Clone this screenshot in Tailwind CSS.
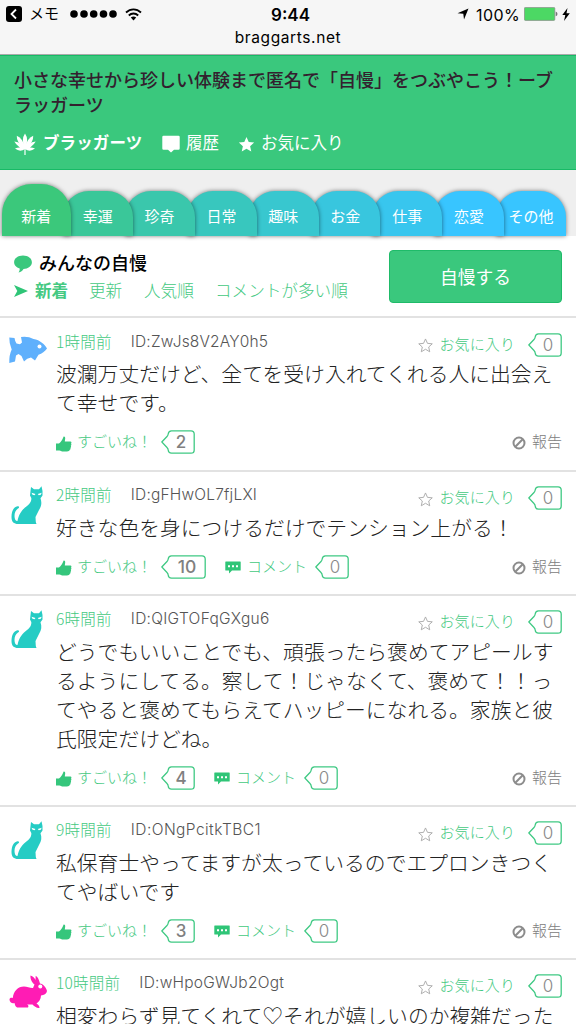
<!DOCTYPE html>
<html lang="ja">
<head>
<meta charset="utf-8">
<title>ブラッガーツ</title>
<script src="https://cdn.jsdelivr.net/npm/@tailwindcss/browser@4"></script>
</head>
<body class="w-[576px] h-[1024px] overflow-hidden bg-white font-['Noto_Sans_CJK_JP',sans-serif] text-[#333] whitespace-nowrap">
<svg class="hidden">
  <symbol id="fish" viewBox="0 0 38 28"><path fill="#5fb0fc" d="M.3 1.500L5.500 2Q6 5.500 7.500 7.500L11 8.300L13 6.500L12 1Q19 0 24.500 3C31 4 36 8.500 38 12.500C36 15.500 33 17.500 29.500 18.800L26 24.500L22 21.500Q18 22 15 25.500L12.500 20L9.500 18L7 19.500L6 25.500L.3 27Q0 19 2.700 13.500Q0 7 .3 1.500Z"/><circle cx="30.500" cy="10.500" r="2" fill="#fff"/></symbol>
  <symbol id="cat" viewBox="0 0 33 38"><path fill="#25ccc4" d="M20 1L23 3.200H28L30.500 .3L31.500 5V9.500L29.500 12.300C31 17 30.500 20 28 24L24.500 31L24.800 36L25.500 38H7C3 38 .5 36 .5 31C.5 25 2.500 21 6.500 20.200C8.500 20 8.600 22 7 22.500C4.500 24 3.500 27 3.500 30C3.500 33 4.500 35 6.500 35C8 27 12 23 16 20C20 17 20.500 14 20.300 12L19 9.500Z"/><path fill="#fff" d="M20.500 6.800L24.500 8L23.500 9.200L21.500 8.800ZM30.700 6.800L26.800 8L27.800 9.200L29.800 8.800Z"/></symbol>
  <symbol id="rabbit" viewBox="0 0 38 34"><path fill="#ff1cb4" d="M21.500 .5C24 1 25.500 3 26.500 5L26.700 .8C29 2 30 5 31 8.500C34 9 37 12 38 16C37.500 19 35 20 32 20.500C32 24 30 27 27.500 28.500C29.500 30 30.500 31 30.500 33C28 33.500 25 31 23.500 29.500L18 29.500C19.500 30 19.800 31.500 19 32.500H9C6.500 32.500 6 30 5.500 28C3.500 29 .5 27.500 .5 24.500C.5 23 2 22.500 3.800 23C4.500 16 9 11.500 15 11.500C18 11.500 22 13.500 24 13L25.500 9.500C23 7.500 21 4 21.500 .5Z"/><circle cx="31.300" cy="11.500" r="2" fill="#fff"/></symbol>
  <symbol id="thumb" viewBox="0 0 16 16"><path fill="#35c67c" d="M7.500 .8C8.300 .2 9.300 1 9.200 2.500L8.800 5.500H14.500C15.500 5.600 15.800 7 15 7.600C15.600 8.300 15.500 9.300 14.800 9.800C15.300 10.500 15.100 11.500 14.400 12C14.800 12.600 14.500 13.500 13.800 13.800C13.500 15 12.500 15.500 11 15.500H7C5.500 15.500 4.500 14.800 3.500 14.500H0V7.500H3C5 6 6.500 3.500 7 2Z"/></symbol>
  <symbol id="comment" viewBox="0 0 16 13"><path fill="#2fc577" d="M.8 .5H15.200Q15.700 .5 15.700 1V9Q15.700 9.500 15.200 9.500H7L4 12.500V9.500H.8Q.3 9.500 .3 9V1Q.3 .5 .8 .5Z"/><path fill="#fff" d="M3 4.300h2v2H3zM7 4.300h2v2H7zM11 4.300h2v2h-2z"/></symbol>
  <symbol id="star" viewBox="0 0 16 16"><path d="M8 1L10.100 5.700L15.200 6.200L11.400 9.600L12.500 14.700L8 12L3.500 14.700L4.600 9.600L.8 6.200L5.900 5.700Z"/></symbol>
  <symbol id="ban" viewBox="0 0 14 14"><g fill="none" stroke="#8c8c8c" stroke-width="2"><circle cx="7" cy="7" r="5.500"/><path d="M3.300 10.700L10.700 3.300"/></g></symbol>
  <symbol id="tag34" viewBox="0 0 34 24"><path fill="#fff" stroke="#3fc983" stroke-width="1.300" d="M.8 12L6 6.500Q7 5.500 7.200 4Q7.500 .8 10.500 .8H30Q33.200 .8 33.200 4V20Q33.200 23.200 30 23.200H10.500Q7.500 23.200 7.200 20Q7 18.500 6 17.500Z"/></symbol>
  <symbol id="tag45" viewBox="0 0 45 24"><path fill="#fff" stroke="#3fc983" stroke-width="1.300" d="M.8 12L6 6.500Q7 5.500 7.200 4Q7.500 .8 10.500 .8H41Q44.200 .8 44.200 4V20Q44.200 23.200 41 23.200H10.500Q7.500 23.200 7.200 20Q7 18.500 6 17.500Z"/></symbol>
</svg>

<div class="h-[55px] bg-[#f6f6f6] text-black font-['Inter',sans-serif] border-b border-[#aaa]">
  <div class="grid grid-cols-[1fr_auto_1fr] items-center h-[28px] pl-[6px] pr-[6px]">
    <div class="flex items-center">
      <svg class="w-[16px] h-[16px]" viewBox="0 0 16 16"><rect width="16" height="16" rx="3" fill="#000"/><path d="M10 3.500L5.500 8L10 12.500" fill="none" stroke="#fff" stroke-width="1.800"/></svg>
      <span class="ml-[7px] -mt-[3px] text-[15px] leading-none w-[29px] font-['Noto_Sans_CJK_JP',sans-serif]">メモ</span>
      <svg class="ml-[12px] w-[48px] h-[8px]" viewBox="0 0 48 8"><circle cx="4" cy="4" r="3.800"/><circle cx="14" cy="4" r="3.800"/><circle cx="23.700" cy="4" r="3.800"/><circle cx="33.500" cy="4" r="3.800"/><circle cx="43" cy="4" r="3.800"/></svg>
      <svg class="ml-[7px] w-[17px] h-[13px]" viewBox="0 0 17 13"><g fill="none" stroke="#000" stroke-width="1.800"><path d="M1 4.500C5.500 .2 11.500 .2 16 4.500"/><path d="M3.800 7.500C6.500 4.800 10.500 4.800 13.200 7.500"/></g><path d="M8.500 12.500L5.800 9.600Q8.500 7.400 11.200 9.600Z"/></svg>
    </div>
    <div class="text-[17px] font-semibold leading-none pt-[2px] pl-[5px]">9:44</div>
    <div class="flex items-center justify-end">
      <svg class="w-[12px] h-[12px] mr-[7px]" viewBox="0 0 12 12"><path d="M11.500 .5L7 11.500L6.300 5.800L.5 5.200Z"/></svg>
      <span class="text-[16px] leading-none pt-[1px] tracking-[0.4px]">100%</span>
      <svg class="ml-[4px] w-[34px] h-[14px]" viewBox="0 0 34 14"><rect x=".4" y=".4" width="30.400" height="13" rx="1" fill="#4cd864" stroke="#888" stroke-width=".7"/><path d="M31.700 4.500Q33.500 5 33.500 7T31.700 9.300Z" fill="#777"/></svg>
      <svg class="ml-[4px] w-[8px] h-[13px]" viewBox="0 0 8 13"><path d="M5.500 0L.3 7H3.300L2 13L7.800 5.300H4.500Z"/></svg>
    </div>
  </div>
  <div class="text-center text-[15.5px] leading-[20px] tracking-[0.6px]">braggarts.net</div>
</div>

<header class="h-[115px] bg-[#3ac87d] border-t border-b-[1.5px] border-[#17ba66] pl-[14px] pt-[11px]">
  <h1 class="text-[18px] leading-[25px] font-medium text-[#33202e]">小さな幸せから珍しい体験まで匿名で「自慢」をつぶやこう！ーブ<br>ラッガーツ</h1>
  <nav class="mt-[13px] flex items-center h-[24px] text-white text-[16.500px]">
    <svg class="w-[22px] h-[22px] mt-[4px]" viewBox="0 0 22 22"><g fill="#fff"><path id="leaf" d="M11 .5Q15 6 11.500 16H10.500Q7 6 11 .5Z"/><use href="#leaf" transform="rotate(32 11 16)"/><use href="#leaf" transform="rotate(-32 11 16)"/><path d="M21.700 8.500Q18 15 11 16Q14 9 21.700 8.500ZM.3 8.500Q4 15 11 16Q8 9 .3 8.500ZM21 15.500Q16 19.500 11 16Q16 13.500 21 15.500ZM1 15.500Q6 19.500 11 16Q6 13.500 1 15.500Z"/><path d="M10.400 15h1.200v7h-1.200z"/></g></svg>
    <span class="ml-[7px] w-[100px] font-bold tracking-[0.100px]">ブラッガーツ</span>
    <svg class="ml-[19px] w-[18px] h-[18px] mt-[3px]" viewBox="0 0 18 18"><path fill="#fff" d="M1.500 .8H16.500Q17.700 .8 17.700 2V13.500Q17.700 14.700 16.500 14.700H12L9 17.500L6 14.700H1.500Q.3 14.700 .3 13.500V2Q.3 .8 1.500 .8Z"/></svg>
    <span class="ml-[6px] w-[33px]">履歴</span>
    <svg class="ml-[19px] w-[17px] h-[17px] mt-[4px] fill-white"><use href="#star"/></svg>
    <span class="ml-[6px]">お気に入り</span>
  </nav>
</header>

<div class="h-[66px] bg-[#efefef] pl-[2px] flex items-end" id="tabs"></div>

<section class="h-[82px] bg-white border-b-2 border-[#e2e2e2] flex pl-[14px] pr-[14px] justify-between">
  <div>
    <div class="mt-[14px] flex items-center h-[24px]">
      <svg class="w-[18px] h-[18px] mt-[3px]" viewBox="0 0 18 18"><path fill="#3ac87d" d="M9 .5C14 .5 17.900 3.300 17.900 7.200S14 13.800 9.500 13.900C8.500 15.500 7 17 4.500 17.500C5.500 16 5.800 14.500 5.700 13.400C2.300 12.500 .1 10 .1 7.200C.1 3.300 4 .5 9 .5Z"/></svg>
      <h2 class="ml-[7px] text-[18px] font-medium text-black leading-[24px]">みんなの自慢</h2>
    </div>
    <div class="mt-[4px] flex items-center h-[24px] text-[16.600px] text-[#45c982] leading-[24px] font-light">
      <svg class="w-[14px] h-[14px] mt-[2px]" viewBox="0 0 14 14"><path fill="#2fc577" d="M0 1L14 7L0 13L3.300 7Z"/></svg>
      <span class="ml-[7px] w-[54px] font-bold">新着</span>
      <span class="w-[55px]">更新</span>
      <span class="w-[71px]">人気順</span>
      <span>コメントが多い順</span>
    </div>
  </div>
  <div class="mt-[14px] w-[173px] h-[53px] rounded-[4px] bg-[#3ac87d] border-[1.5px] border-[#1fbb69] text-white text-[17.800px] leading-[50px] text-center">自慢する</div>
</section>

<main id="posts"></main>

<script>
const tabs = [['新着','#3bc87b'],['幸運','#3ac799'],['珍奇','#3ac7ac'],['日常','#38c7be'],['趣味','#38c7cf'],['お金','#38c6de'],['仕事','#38c6ee'],['恋愛','#38c5ff'],['その他','#38c5ff']];
document.getElementById('tabs').innerHTML = tabs.map(([t, c], i) =>
  `<div class="${i ? 'relative -ml-[8px] w-[69.900px] h-[45px] pt-[13px] rounded-t-[26px]' : 'relative w-[69px] h-[52px] pt-[20px] rounded-t-[30px]'} shrink-0 pr-[0.500px] text-center text-white text-[15px] leading-[24px] shadow-[0_0_4px_rgba(0,0,0,0.5)]" style="background:${c};z-index:${9 - i}">${t}</div>`).join('');

const tag = (n, strong) => n > 9
  ? `<span class="grid w-[45px] h-[24px]"><svg class="col-start-1 row-start-1 w-[45px] h-[24px]"><use href="#tag45"/></svg><b class="col-start-1 row-start-1 pl-[7px] text-center font-['Inter',sans-serif] font-medium text-[17.500px] leading-[23px] text-[#808080]">${n}</b></span>`
  : `<span class="grid w-[34px] h-[24px]"><svg class="col-start-1 row-start-1 w-[34px] h-[24px]"><use href="#tag34"/></svg><b class="col-start-1 row-start-1 pl-[6px] text-center font-['Inter',sans-serif] ${strong ? 'font-medium text-[#808080]' : 'font-light text-[#888]'} text-[17px] leading-[24px]">${n}</b></span>`;

const posts = [
  ['fish', '1時間前', 'ZwJs8V2AY0h5', ['波瀾万丈だけど、全てを受け入れてくれる人に出会え', 'て幸せです。'], 2, false, 131],
  ['cat', '2時間前', 'gFHwOL7fjLXI', ['好きな色を身につけるだけでテンション上がる！'], 10, true, 130],
  ['cat', '6時間前', 'QIGTOFqGXgu6', ['どうでもいいことでも、頑張ったら褒めてアピールす', 'るようにしてる。察して！じゃなくて、褒めて！！っ', 'てやると褒めてもらえてハッピーになれる。家族と彼', '氏限定だけどね。'], 4, true, 139],
  ['cat', '9時間前', 'ONgPcitkTBC1', ['私保育士やってますが太っているのでエプロンきつく', 'てやばいです'], 3, true, 131],
  ['rabbit', '10時間前', 'wHpoGWJb2Ogt', ['相変わらず見てくれて♡それが嬉しいのか複雑だった'], null, false, 137],
];
const icons = {
  fish: '<svg class="ml-[9px] mt-[18px] w-[38px] h-[28px]"><use href="#fish"/></svg>',
  cat: '<svg class="ml-[11px] mt-[14px] w-[33px] h-[38px]"><use href="#cat"/></svg>',
  rabbit: '<svg class="ml-[9px] mt-[15px] w-[38px] h-[34px]"><use href="#rabbit"/></svg>',
};
document.getElementById('posts').innerHTML = posts.map(([ic, time, id, lines, likes, com, w], i) => `
<article class="flex font-light ${i < 4 ? 'border-b-2 border-[#e2e2e2]' : ''} ${i ? '' : 'pb-[0.500px]'}">
  <div class="w-[56px] shrink-0">${icons[ic]}</div>
  <div class="w-[506px]">
    <div class="flex h-[42px] pt-[9.500px] text-[15.500px] leading-[26px]">
      <span class="text-[#45c982] mr-[19px] tracking-[0.250px]">${time}</span>
      <span class="id text-[#555] font-['Inter',sans-serif] font-light self-start pt-[1px]" data-w="${w}">ID:${id}</span>
      <span class="ml-auto flex items-center h-[24px] mt-[5px] text-[15px] text-[#45c982]">
        <svg class="w-[15px] h-[15px] mt-[2px] mr-[6px] fill-none stroke-[#aaa] stroke-1"><use href="#star"/></svg><span class="tracking-[0.100px] -mt-[2px]">お気に入り</span><span class="ml-[13px]">${tag(0)}</span>
      </span>
    </div>
    <div class="text-[20.800px] leading-[27px] text-[#222]">${lines.map(l => `<p class="h-[29px]">${l}</p>`).join('')}</div>
    ${likes === null ? '' : `<div class="flex items-center h-[24px] mt-[12px] mb-[15px] text-[15px] text-[#45c982]">
      <svg class="w-[16px] h-[16px] mt-[3px] mr-[5px]"><use href="#thumb"/></svg><span class="w-[84px] -mt-[1px]">すごいね！</span>${tag(likes, true)}
      ${com ? `<svg class="w-[16px] h-[13px] ml-[19px] mr-[6px] mt-[2px]"><use href="#comment"/></svg><span class="w-[68px] -mt-[1px]">コメント</span>${tag(0)}` : ''}
      <svg class="w-[14px] h-[14px] ml-auto mt-[2px] mr-[6px]"><use href="#ban"/></svg><span class="text-[#808080] -mt-[1px]">報告</span>
    </div>`}
  </div>
</article>`).join('');

document.querySelectorAll('.id').forEach(e => {
  e.style.letterSpacing = '0.1px';
  const d = (e.dataset.w - e.getBoundingClientRect().width) / e.textContent.length;
  e.style.letterSpacing = (0.1 + d) + 'px';
});
</script>
</body>
</html>
